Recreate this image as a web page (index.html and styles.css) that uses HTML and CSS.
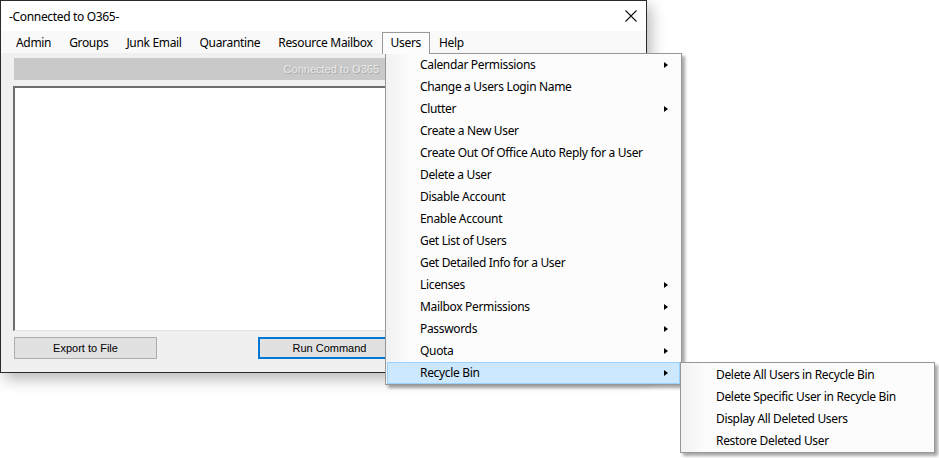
FILE: index.html
```
<!DOCTYPE html>
<html>
<head>
<meta charset="utf-8">
<link rel="stylesheet" href="styles.css">
</head>
<body>
<div class="stage">
  <div class="window">
    <div class="titlebar">
      <span class="title">-Connected to O365-</span>
      <svg class="close" width="12" height="12" viewBox="0 0 12 12"><path d="M0.5 0.5 L11.5 11.5 M11.5 0.5 L0.5 11.5" stroke="#111" stroke-width="1.1" fill="none"/></svg>
    </div>
    <div class="menubar">
      <span class="mi">Admin</span>
      <span class="mi">Groups</span>
      <span class="mi">Junk Email</span>
      <span class="mi">Quarantine</span>
      <span class="mi">Resource Mailbox</span>
      <span class="mi open">Users</span>
      <span class="mi">Help</span>
    </div>
    <div class="content">
      <div class="status">Connected to O365</div>
      <div class="output"></div>
      <div class="buttons">
        <button class="btn">Export to File</button>
        <button class="btn primary">Run Command</button>
      </div>
    </div>
  </div>

  <div class="dropdown">
    <div class="item sub">Calendar Permissions</div>
    <div class="item">Change a Users Login Name</div>
    <div class="item sub">Clutter</div>
    <div class="item">Create a New User</div>
    <div class="item">Create Out Of Office Auto Reply for a User</div>
    <div class="item">Delete a User</div>
    <div class="item">Disable Account</div>
    <div class="item">Enable Account</div>
    <div class="item">Get List of Users</div>
    <div class="item">Get Detailed Info for a User</div>
    <div class="item sub">Licenses</div>
    <div class="item sub">Mailbox Permissions</div>
    <div class="item sub">Passwords</div>
    <div class="item sub">Quota</div>
    <div class="item sub hl">Recycle Bin</div>
  </div>

  <div class="submenu">
    <div class="item">Delete All Users in Recycle Bin</div>
    <div class="item">Delete Specific User in Recycle Bin</div>
    <div class="item">Display All Deleted Users</div>
    <div class="item">Restore Deleted User</div>
  </div>
</div>
</body>
</html>
```
FILE: styles.css
```
* { box-sizing: border-box; }
html, body { margin: 0; padding: 0; background: #ffffff; }
body {
  width: 939px; height: 458px; overflow: hidden;
  font-family: "Noto Sans", "Open Sans", sans-serif;
  font-size: 12px; letter-spacing: -0.33px; color: #000;
}
.stage { position: relative; width: 939px; height: 458px; }

.window {
  width: 647px; height: 373px;
  border: 1px solid #2b2b2b;
  background: #f0f0f0;
  box-shadow: 4px 6px 14px rgba(0,0,0,0.28);
  display: flex; flex-direction: column;
}
.titlebar {
  height: 30px; background: #ffffff;
  display: flex; align-items: center; justify-content: space-between;
  padding: 0 9px 0 8px;
}
.title { font-size: 12px; }

.menubar {
  height: 22px; background: #f9f9f9;
  display: flex; align-items: center;
  padding-left: 6px;
}
.mi { padding: 0 8px; line-height: 20px; height: 21px; margin-top: 1px; border: 1px solid transparent; border-bottom: none; }
.mi.open {
  border-color: #999999; background: #fcfcfc;
  position: relative; z-index: 5; height: 22px; margin-top: 2px; line-height: 19px;
}

.content { padding: 5px 12px 0 12px; display: flex; flex-direction: column; }
.status {
  height: 22px; background: #c9c9c9; margin-left: 1px; margin-right: 1px;
  font-family: "Liberation Sans", Arial, sans-serif; font-size: 11px; letter-spacing: 0;
  color: #e9e9e9; text-shadow: 1px 1px 0 #a9a9a9;
  display: flex; align-items: center; justify-content: flex-end;
  padding-right: 254px;
}
.output {
  margin-top: 6px; height: 245px; background: #ffffff;
  border-top: 2px solid #6d6d6d; border-left: 2px solid #6d6d6d;
  border-right: 1px solid #e3e3e3; border-bottom: 1px solid #e3e3e3;
}
.buttons { margin-top: 6px; display: flex; gap: 101px; padding-left: 1px; }
.btn {
  width: 143px; height: 22px; background: #e1e1e1;
  border: 1px solid #adadad; font-family: "Liberation Sans", Arial, sans-serif;
  font-size: 11px; letter-spacing: 0; color: #000; padding: 0;
}
.btn.primary { border: 2px solid #0078d7; }

.dropdown {
  position: absolute; left: 385px; top: 53px; width: 297px; height: 332px;
  border: 1px solid #979797;
  background: linear-gradient(to right, #f1f1f1 0px, #fbfbfb 22px, #fcfcfc 26px, #fcfcfc 100%);
  box-shadow: 3px 3px 3px rgba(0,0,0,0.35);
  padding: 0 1px;
  z-index: 3;
}
.item {
  height: 22px; padding-left: 32px; position: relative;
  border: 1px solid transparent; line-height: 20px;
}
.item.sub::after {
  content: ""; position: absolute; right: 11px; top: 7px;
  border-left: 4px solid #000; border-top: 3.5px solid transparent; border-bottom: 3.5px solid transparent;
}
.item.hl { background: #cce8ff; border-color: #99d1ff; }

.submenu {
  position: absolute; left: 680px; top: 362px; width: 255px; height: 91px;
  border: 1px solid #979797;
  background: linear-gradient(to right, #f1f1f1 0px, #fbfbfb 22px, #fcfcfc 26px, #fcfcfc 100%);
  box-shadow: 3px 3px 3px rgba(0,0,0,0.35);
  padding: 1px 1px;
  z-index: 4;
}
.submenu .item { padding-left: 33px; }
```
